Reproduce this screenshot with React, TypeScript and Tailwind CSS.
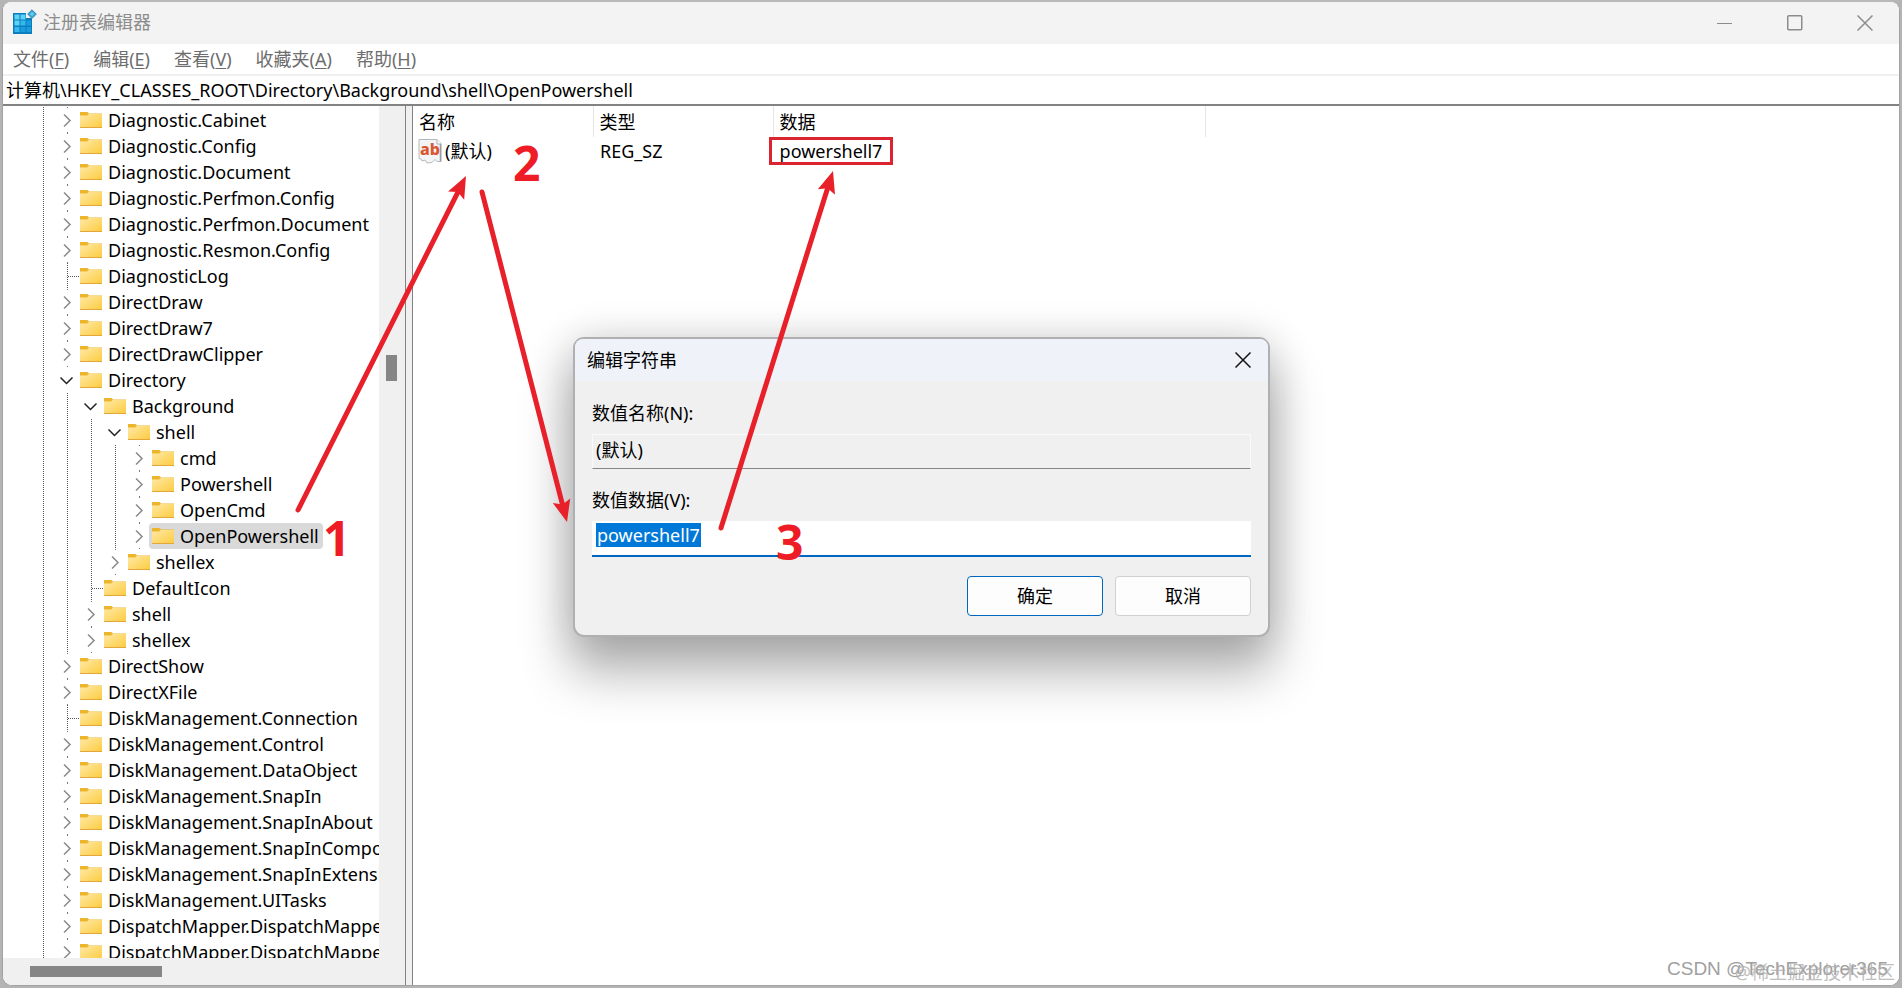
import React from "react";

type Kind = "closed" | "open" | "leaf";
type Node = { name: string; depth: number; kind: Kind; selected?: boolean };

const n = (name: string, depth = 0, kind: Kind = "closed", selected = false): Node => ({ name, depth, kind, selected });

const nodes: Node[] = [
  n("Diagnostic.Cabinet"),
  n("Diagnostic.Config"),
  n("Diagnostic.Document"),
  n("Diagnostic.Perfmon.Config"),
  n("Diagnostic.Perfmon.Document"),
  n("Diagnostic.Resmon.Config"),
  n("DiagnosticLog", 0, "leaf"),
  n("DirectDraw"),
  n("DirectDraw7"),
  n("DirectDrawClipper"),
  n("Directory", 0, "open"),
  n("Background", 1, "open"),
  n("shell", 2, "open"),
  n("cmd", 3),
  n("Powershell", 3),
  n("OpenCmd", 3),
  n("OpenPowershell", 3, "closed", true),
  n("shellex", 2),
  n("DefaultIcon", 1, "leaf"),
  n("shell", 1),
  n("shellex", 1),
  n("DirectShow"),
  n("DirectXFile"),
  n("DiskManagement.Connection", 0, "leaf"),
  n("DiskManagement.Control"),
  n("DiskManagement.DataObject"),
  n("DiskManagement.SnapIn"),
  n("DiskManagement.SnapInAbout"),
  n("DiskManagement.SnapInComponent"),
  n("DiskManagement.SnapInExtension"),
  n("DiskManagement.UITasks"),
  n("DispatchMapper.DispatchMapper"),
  n("DispatchMapper.DispatchMapper.1"),
];

const menus: [string, string][] = [
  ["文件", "F"],
  ["编辑", "E"],
  ["查看", "V"],
  ["收藏夹", "A"],
  ["帮助", "H"],
];

function Folder() {
  return (
    <svg width="22" height="18" viewBox="0 0 22 18" className="shrink-0" aria-hidden="true">
      <defs>
        <linearGradient id="folder" x1="0" y1="0" x2="1" y2="1">
          <stop offset="0" stopColor="#ffe9a6" />
          <stop offset="1" stopColor="#fccb3e" />
        </linearGradient>
      </defs>
      <path d="M0 1h7.5l1.5 1.5H22V8H0z" fill="#edb52c" />
      <path d="M0 4.5h7l1.5-1.5H22V17H0z" fill="url(#folder)" />
      <path d="M0 16.5h22" stroke="#e2a63a" />
    </svg>
  );
}

function Guide() {
  return (
    <svg width="24" height="26" className="shrink-0" aria-hidden="true">
      <path d="M12.5 0v26" stroke="#555" strokeDasharray="1 1" />
    </svg>
  );
}

function Expander({ kind }: { kind: Kind }) {
  return (
    <svg width="24" height="26" className="shrink-0" fill="none" aria-hidden="true">
      {kind === "leaf" && <path d="M12.5 0v26M13 13.5h11" stroke="#555" strokeDasharray="1 1" />}
      {kind === "closed" && (
        <>
          <path d="M12.5 0v1M12.5 25v1" stroke="#777" />
          <path d="M9 7.5l6 6-6 6" stroke="#8a8a8a" strokeWidth="1.5" />
        </>
      )}
      {kind === "open" && <path d="M5.5 10.5l6 6 6-6" stroke="#222" strokeWidth="1.5" />}
    </svg>
  );
}

function TreeRow({ node }: { node: Node }) {
  return (
    <li className="flex h-[26px] items-center">
      {Array.from({ length: node.depth + 1 }, (_, i) => (
        <Guide key={i} />
      ))}
      <Expander kind={node.kind} />
      <span className={`-ml-[2px] flex h-[26px] items-center gap-[6px] rounded-sm pl-[3px] pr-1 ${node.selected ? "bg-[#d9d9d9]" : ""}`}>
        <Folder />
        <span className="whitespace-nowrap">{node.name}</span>
      </span>
    </li>
  );
}

function AppIcon() {
  return (
    <svg width="26" height="26" viewBox="0 0 26 26" aria-hidden="true">
      <path d="M1 4h13v5h6v16H1z" fill="#0a7fc0" />
      <path d="M2.500 5.500h5v5h-5zM8.500 5.500h5v5h-5zM2.500 11.500h5v5h-5z" fill="#5fd2f6" />
      <path d="M8.500 11.500h5v5h-5zM2.500 18h5v5h-5z" fill="#35b9ed" />
      <path d="M14.500 11.500h4.500v5h-4.500zM8.500 18h5v5h-5zM14.500 18h4.500v5h-4.500z" fill="#1a9bdc" />
      <path d="M20 .8l4.300 4.300-4.300 4.300-4.300-4.300z" fill="#3aa9d8" stroke="#3787ab" />
      <path d="M20 3l2 2-2 2-2-2z" fill="#6ccff2" />
    </svg>
  );
}

function StringIcon() {
  return (
    <svg width="24" height="26" viewBox="0 0 24 26" aria-hidden="true">
      <path d="M1 1.500h18l4 4V23.500h-4l-2-2-3 3-5 .5-2-3-3 1-1-2-2-.5z" fill="#f3f4f5" stroke="#b5b9bc" />
      <path d="M22.500 6v17.500" stroke="#9a9fa3" strokeWidth="1.500" />
      <path d="M19 1.500V6h4" fill="#fff" stroke="#a9adb0" />
      <text x="2" y="17" fontSize="16" fontWeight="800" fill="#d9562f" fontFamily="Noto Sans, sans-serif">ab</text>
    </svg>
  );
}

function Arrow({ x1, y1, x2, y2 }: { x1: number; y1: number; x2: number; y2: number }) {
  const len = Math.hypot(x2 - x1, y2 - y1);
  const angle = (Math.atan2(y2 - y1, x2 - x1) * 180) / Math.PI;
  return (
    <g transform={`translate(${x1} ${y1}) rotate(${angle})`}>
      <path d={`M0 0H${len - 16}`} stroke="#e8202a" strokeWidth="5" strokeLinecap="round" />
      <path d={`M${len} 0l-22 -9l4 9l-4 9z`} fill="#e8202a" />
    </g>
  );
}

function Annotations() {
  return (
    <svg className="pointer-events-none absolute left-0 top-0" width="920" height="600" aria-hidden="true">
      <Arrow x1={298} y1={510} x2={466} y2={176} />
      <Arrow x1={482} y1={192} x2={567} y2={522} />
      <Arrow x1={721} y1={528} x2={833} y2={171} />
      <g fill="#ee1c25" fontSize="48" fontWeight="700" fontFamily="Noto Sans, sans-serif">
        <text x="323" y="556">1</text>
        <text x="513" y="181">2</text>
        <text x="776" y="560">3</text>
      </g>
    </svg>
  );
}

function EditDialog() {
  return (
    <section
      role="dialog"
      aria-label="编辑字符串"
      className="absolute left-[573px] top-[337px] flex w-[697px] flex-col rounded-[11px] border-2 border-[#aeb0b2] bg-[#f0f0f0] shadow-[0_32px_50px_4px_rgba(0,0,0,0.3),0_0_40px_rgba(0,0,0,0.14)]"
    >
      <header className="flex h-[42px] items-center justify-between rounded-t-lg bg-[#eff3f9] pl-3 pr-[15px]">
        <h2>编辑字符串</h2>
        <button aria-label="关闭" className="flex size-5 items-center justify-center">
          <svg width="16" height="16" aria-hidden="true">
            <path d="M.5.5l15 15M15.500.5l-15 15" stroke="#111" strokeWidth="1.500" />
          </svg>
        </button>
      </header>
      <form className="flex flex-col px-[17px] pb-[19px] pt-5" onSubmit={(e) => e.preventDefault()}>
        <label htmlFor="value-name" className="leading-6">数值名称(N):</label>
        <input
          id="value-name"
          readOnly
          defaultValue="(默认)"
          className="mt-[9px] h-[35px] border border-[#fafafa] border-b-[#868686] bg-[#f0f0f0] px-[3px] pb-[6px] outline-none"
        />
        <label htmlFor="value-data" className="mt-[19px] leading-6">数值数据(V):</label>
        <div className="relative mt-[9px] flex h-9 border-b-2 border-[#0067c0] bg-white">
          <input id="value-data" defaultValue="powershell7" className="absolute inset-0 w-full bg-transparent px-[3px] text-transparent outline-none" />
          <span className="ml-1 mt-[2px] h-6 bg-[#0078d7] px-px leading-6 text-white">powershell7</span>
        </div>
        <div className="mt-[19px] flex justify-end gap-3">
          <button type="submit" className="h-10 w-[136px] rounded border border-[#0067c0] bg-[#fdfdfd]">确定</button>
          <button type="button" className="h-10 w-[136px] rounded border border-[#d0d0d0] bg-[#fdfdfd]">取消</button>
        </div>
      </form>
    </section>
  );
}

export default function App() {
  return (
    <div className="relative flex h-screen overflow-hidden bg-[#b4b4b4] px-[2px] pb-[2px] font-['Noto_Sans','Noto_Sans_CJK_SC',sans-serif] text-[18px] text-black">
      <main className="flex min-w-0 flex-1 flex-col overflow-hidden rounded-[10px] border border-t-2 border-[#a2a2a2] border-t-[#b9b9b9] bg-white">
        <header className="flex h-[42px] shrink-0 items-center justify-between bg-[#f3f3f3] pl-[9px] pr-[26px] text-[#8c8c8c]">
          <h1 className="flex items-center gap-[5px] pb-[2px]">
            <AppIcon />
            注册表编辑器
          </h1>
          <div className="flex gap-[54px]">
            <button aria-label="最小化"><svg width="16" height="16" aria-hidden="true"><path d="M0 8.500h15" stroke="#8c8c8c" /></svg></button>
            <button aria-label="最大化"><svg width="16" height="16" aria-hidden="true"><rect x=".75" y=".75" width="14" height="14" rx="1" fill="none" stroke="#8c8c8c" strokeWidth="1.500" /></svg></button>
            <button aria-label="关闭"><svg width="16" height="16" aria-hidden="true"><path d="M.5.5l15 15M15.500.5l-15 15" stroke="#8c8c8c" strokeWidth="1.500" /></svg></button>
          </div>
        </header>
        <nav className="flex h-[32px] shrink-0 items-center gap-6 border-b-2 border-[#f0f0f0] pl-[10px] text-[#6d6d6d]">
          {menus.map(([label, key]) => (
            <button key={key}>
              {label}(<u className="underline-offset-2">{key}</u>)
            </button>
          ))}
        </nav>
        <input
          aria-label="地址"
          className="h-[28px] shrink-0 px-[3px] pb-[2px] outline-none"
          defaultValue="计算机\HKEY_CLASSES_ROOT\Directory\Background\shell\OpenPowershell"
        />
        <div className="flex min-h-0 flex-1 border-t-2 border-[#838383] bg-[#f0f0f0]">
          <aside className="flex w-[403px] shrink-0 flex-col border-r border-[#838383]">
            <div className="flex min-h-0 flex-1">
              <ul className="min-w-0 flex-1 overflow-hidden bg-white pl-[28px] pt-px">
                {nodes.map((node, i) => (
                  <TreeRow key={i} node={node} />
                ))}
              </ul>
              <div className="w-[26px] shrink-0 bg-[#f0f0f0] pl-[7px] pt-[249px]">
                <div className="h-[26px] w-[11px] bg-[#868686]" />
              </div>
            </div>
            <div className="h-[27px] shrink-0 bg-[#f0f0f0] pl-[27px] pt-2">
              <div className="h-[11px] w-[132px] bg-[#868686]" />
            </div>
          </aside>
          <section className="ml-[6px] min-w-0 flex-1 border-l border-[#838383] bg-white">
            <table className="table-fixed border-collapse text-left">
              <colgroup>
                <col className="w-[180px]" />
                <col className="w-[180px]" />
                <col className="w-[432px]" />
              </colgroup>
              <thead>
                <tr className="h-[31px]">
                  {["名称", "类型", "数据"].map((h) => (
                    <th key={h} className="border-r border-[#e5e5e5] p-0 pl-[6px] pt-[2px] font-normal">{h}</th>
                  ))}
                </tr>
              </thead>
              <tbody>
                <tr className="h-[28px]">
                  <td className="p-0 pl-[5px]">
                    <span className="flex items-center gap-[3px]"><StringIcon />(默认)</span>
                  </td>
                  <td className="p-0 pl-[7px]">REG_SZ</td>
                  <td className="p-0">
                    <span className="-ml-[4px] flex h-[28px] w-[124px] items-center justify-center border-[3px] border-[#dc2430]">powershell7</span>
                  </td>
                </tr>
              </tbody>
            </table>
          </section>
        </div>
      </main>
      <EditDialog />
      <Annotations />
      <p className="absolute bottom-[5px] right-[14px] font-['Liberation_Sans',sans-serif] text-[19px] text-[#a0a0a0]">CSDN @TechExplorer365</p>
      <p className="absolute bottom-[2px] right-[7px] text-[#b0b0b0] opacity-80">@稀土掘金技术社区</p>
    </div>
  );
}
